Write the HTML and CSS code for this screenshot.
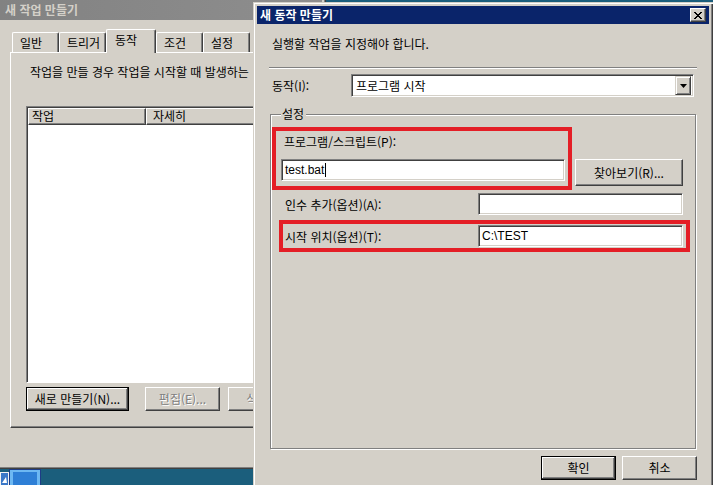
FILE: index.html
```html
<!DOCTYPE html>
<html lang="ko">
<head>
    <meta charset="UTF-8">
    <title>새 동작 만들기</title>
    <link rel="stylesheet" href="styles.css">
</head>
<body>

    <div class="desktop">

        <!-- 뒤쪽 창: 새 작업 만들기 -->
        <div class="window back">
            <div class="titlebar">
                <span class="title">새 작업 만들기</span>
            </div>
            <div class="tabs">
                <div class="tab">일반</div>
                <div class="tab">트리거</div>
                <div class="tab active">동작</div>
                <div class="tab">조건</div>
                <div class="tab">설정</div>
            </div>
            <div class="tab-panel">
                <p class="panel-text">작업을 만들 경우 작업을 시작할 때 발생하는</p>
                <div class="listview">
                    <div class="list-header">
                        <div class="col col-action">작업</div>
                        <div class="col col-detail">자세히</div>
                    </div>
                </div>
                <div class="list-buttons">
                    <button class="btn default btn-new">새로 만들기(N)...</button>
                    <button class="btn btn-edit" disabled>편집(E)...</button>
                    <button class="btn btn-delete" disabled>삭제(D)</button>
                </div>
            </div>
        </div>

        <!-- 앞쪽 대화 상자: 새 동작 만들기 -->
        <div class="window dialog">
            <div class="titlebar">
                <span class="title">새 동작 만들기</span>
                <div class="close-btn">
                    <svg width="8" height="7" viewBox="0 0 8 7">
                        <path d="M0 0h2v1h1v1h2V1h1V0h2v1H7v1H6v1H5v1h1v1h1v1h1v1H6V6H5V5H3v1H2v1H0V6h1V5h1V4h1V3H2V2H1V1H0z" fill="#000"/>
                    </svg>
                </div>
            </div>

            <div class="dialog-body">
                <p class="desc">실행할 작업을 지정해야 합니다.</p>
                <div class="separator"></div>

                <div class="combo-row">
                    <span class="combo-label">동작(I):</span>
                    <div class="combo">
                        <span class="combo-value">프로그램 시작</span>
                        <div class="combo-arrow">
                            <svg width="7" height="4" viewBox="0 0 7 4"><path d="M0 0h7L3.5 4z" fill="#000"/></svg>
                        </div>
                    </div>
                </div>

                <div class="group">
                    <div class="group-title">설정</div>

                    <div class="field-label">프로그램/스크립트(P):</div>
                    <div class="row row-program">
                        <div class="field field-program">test.bat<span class="caret"></span></div>
                        <button class="btn btn-browse">찾아보기(R)...</button>
                    </div>

                    <div class="row row-args">
                        <span class="row-label">인수 추가(옵션)(A):</span>
                        <div class="field field-short"></div>
                    </div>

                    <div class="row row-start">
                        <span class="row-label">시작 위치(옵션)(T):</span>
                        <div class="field field-short">C:\TEST</div>
                    </div>
                </div>

                <div class="dialog-buttons">
                    <button class="btn default">확인</button>
                    <button class="btn">취소</button>
                </div>
            </div>

            <!-- 빨간 강조 표시 -->
            <div class="mark mark-program"></div>
            <div class="mark mark-start"></div>
        </div>

        <svg class="desk-icon" width="42" height="16" viewBox="0 0 42 16">
            <rect x="0" y="3" width="9" height="13" fill="#f2f2f2"/>
            <rect x="1" y="4" width="7" height="12" fill="#3b78c8"/>
            <path d="M2 14L6 8L7 14z" fill="#fff"/>
            <rect x="9" y="0" width="32" height="16" fill="#1e3c86"/>
            <rect x="10" y="1" width="30" height="15" fill="#6db8f2"/>
            <rect x="13" y="3" width="24" height="13" fill="#2e7fd6"/>
        </svg>
    </div>

</body>
</html>
```

FILE: styles.css
```css
* {
    box-sizing: border-box;
}
body {
    margin: 0;
    width: 713px;
    height: 485px;
    overflow: hidden;
    background-color: #1b5e7c;
    font-family: "Noto Sans CJK KR", "Liberation Sans", sans-serif;
    font-size: 12px;
    line-height: 16px;
    color: #000;
}
p {
    margin: 0;
}
.desktop {
    position: relative;
    width: 713px;
    height: 485px;
    overflow: hidden;
}

/* 창 공통 */
.window {
    position: absolute;
    background-color: #d4d0c8;
    padding: 4px;
    box-shadow: inset 1px 1px #d4d0c8, inset 2px 2px #fff, inset -1px -1px #404040, inset -2px -2px #808080;
}
.titlebar {
    display: flex;
    align-items: center;
    height: 18px;
    padding: 0 2px 0 3px;
    background-color: #0a246a;
    color: #fff;
    font-weight: bold;
}
.title {
    line-height: 14px;
}

/* 버튼 */
.btn {
    height: 24px;
    padding: 0;
    border: 1px solid;
    border-color: #fff #404040 #404040 #fff;
    box-shadow: inset -1px -1px #808080, inset 1px 1px #d4d0c8;
    background-color: #d4d0c8;
    font-family: inherit;
    font-size: 12px;
    color: #000;
    line-height: 14px;
}
.btn.default {
    border-color: #000;
    box-shadow: inset -1px -1px #404040, inset 1px 1px #fff, inset -2px -2px #808080;
}
.btn:disabled {
    color: #808080;
    text-shadow: 1px 1px #fff;
}

/* 입력 칸 */
.field {
    display: flex;
    align-items: center;
    height: 22px;
    padding-left: 3px;
    border: 1px solid;
    border-color: #808080 #fff #fff #808080;
    box-shadow: inset 1px 1px #404040, inset -1px -1px #d4d0c8;
    background-color: #fff;
    font-family: "Liberation Sans", sans-serif;
    font-size: 12px;
    line-height: 14px;
}
.caret {
    display: inline-block;
    width: 1px;
    height: 14px;
    margin-left: 1px;
    background-color: #000;
}

/* 뒤쪽 창 */
.back {
    left: -4px;
    top: -4px;
    width: 330px;
    height: 473px;
}
.back .titlebar {
    height: 20px;
    padding-left: 5px;
    background: linear-gradient(to right, #828282, #8e8e8e);
    color: #d4d0c8;
}
.tabs {
    display: flex;
    align-items: flex-end;
    height: 32px;
    padding-left: 12px;
}
.tab {
    width: 47px;
    height: 20px;
    padding-left: 7px;
    border: 1px solid;
    border-bottom: none;
    border-color: #fff #404040 #404040 #fff;
    border-radius: 2px 2px 0 0;
    box-shadow: inset -1px 0 #808080;
    line-height: 19px;
}
.tab.active {
    position: relative;
    z-index: 1;
    width: 50px;
    height: 24px;
    margin-bottom: -1px;
    padding-left: 8px;
    background-color: #d4d0c8;
    line-height: 20px;
}
.tab-panel {
    width: 320px;
    height: 376px;
    margin-left: 10px;
    padding: 11px 0 0 15px;
    border: 1px solid;
    border-color: #fff #404040 #404040 #fff;
    box-shadow: inset -1px -1px #808080;
}
.panel-text {
    padding-left: 4px;
    white-space: nowrap;
}
.listview {
    width: 300px;
    height: 277px;
    margin-top: 26px;
    padding: 1px;
    border: 1px solid;
    border-color: #808080 #fff #fff #808080;
    box-shadow: inset 1px 1px #404040;
    background-color: #fff;
}
.list-header {
    display: flex;
    height: 17px;
}
.col {
    padding-left: 3px;
    border: 1px solid;
    border-color: #fff #404040 #404040 #fff;
    box-shadow: inset -1px -1px #808080;
    background-color: #d4d0c8;
    line-height: 14px;
}
.col-action {
    width: 118px;
}
.col-detail {
    flex: 1;
    padding-left: 6px;
}
.list-buttons {
    display: flex;
    margin-top: 4px;
}
.btn-new {
    width: 103px;
}
.btn-edit {
    width: 75px;
    margin-left: 16px;
}
.btn-delete {
    width: 75px;
    margin-left: 8px;
}

/* 대화 상자 */
.dialog {
    left: 253px;
    top: 2px;
    width: 460px;
    height: 490px;
}
.close-btn {
    display: flex;
    align-items: center;
    justify-content: center;
    width: 16px;
    height: 14px;
    margin-left: auto;
    margin-right: 1px;
    border: 1px solid;
    border-color: #fff #404040 #404040 #fff;
    box-shadow: inset -1px -1px #808080;
    background-color: #d4d0c8;
}
.dialog-body {
    padding: 0 12px;
}
.desc {
    margin: 12px 0 0 3px;
}
.separator {
    height: 2px;
    margin-top: 15px;
    border-top: 1px solid #808080;
    border-bottom: 1px solid #fff;
}
.combo-row {
    display: flex;
    align-items: center;
    margin-top: 5px;
}
.combo-label {
    width: 82px;
    padding-left: 3px;
}
.combo {
    display: flex;
    align-items: center;
    width: 343px;
    height: 23px;
    padding: 2px 2px 2px 4px;
    border: 1px solid;
    border-color: #808080 #fff #fff #808080;
    box-shadow: inset 1px 1px #404040, inset -1px -1px #d4d0c8;
    background-color: #fff;
}
.combo-value {
    flex: 1;
}
.combo-arrow {
    display: flex;
    align-items: center;
    justify-content: center;
    width: 16px;
    height: 19px;
    border: 1px solid;
    border-color: #d4d0c8 #404040 #404040 #d4d0c8;
    box-shadow: inset 1px 1px #fff, inset -1px -1px #808080;
    background-color: #d4d0c8;
}

/* 설정 그룹 */
.group {
    height: 335px;
    margin: 17px 1px 0;
    padding: 0 12px 0 10px;
    border: 1px solid #808080;
    box-shadow: inset 1px 1px #fff, 1px 1px #fff;
}
.group-title {
    width: fit-content;
    margin-top: -8px;
    padding: 0 2px 0 1px;
    background-color: #d4d0c8;
    line-height: 14px;
}
.field-label {
    margin-top: 13px;
    padding-left: 3px;
}
.row {
    display: flex;
    align-items: center;
}
.row-program {
    align-items: flex-start;
    margin-top: 9px;
}
.row-args {
    margin-top: 7px;
}
.row-start {
    margin-top: 10px;
}
.row-label {
    width: 197px;
    padding: 2px 0 0 4px;
}
.field-program {
    width: 284px;
}
.btn-browse {
    width: 108px;
    height: 27px;
    margin-left: 10px;
}
.field-short {
    width: 205px;
}
.dialog-buttons {
    display: flex;
    justify-content: flex-end;
    gap: 6px;
    margin-top: 7px;
}
.dialog-buttons .btn {
    width: 75px;
}

/* 빨간 강조 */
.mark {
    position: absolute;
    border: 4px solid #e41e26;
}
.mark-program {
    left: 19px;
    top: 125px;
    width: 300px;
    height: 63px;
}
.mark-start {
    left: 26px;
    top: 218px;
    width: 411px;
    height: 32px;
}

.desk-icon {
    position: absolute;
    left: 0;
    bottom: 0;
}
```
